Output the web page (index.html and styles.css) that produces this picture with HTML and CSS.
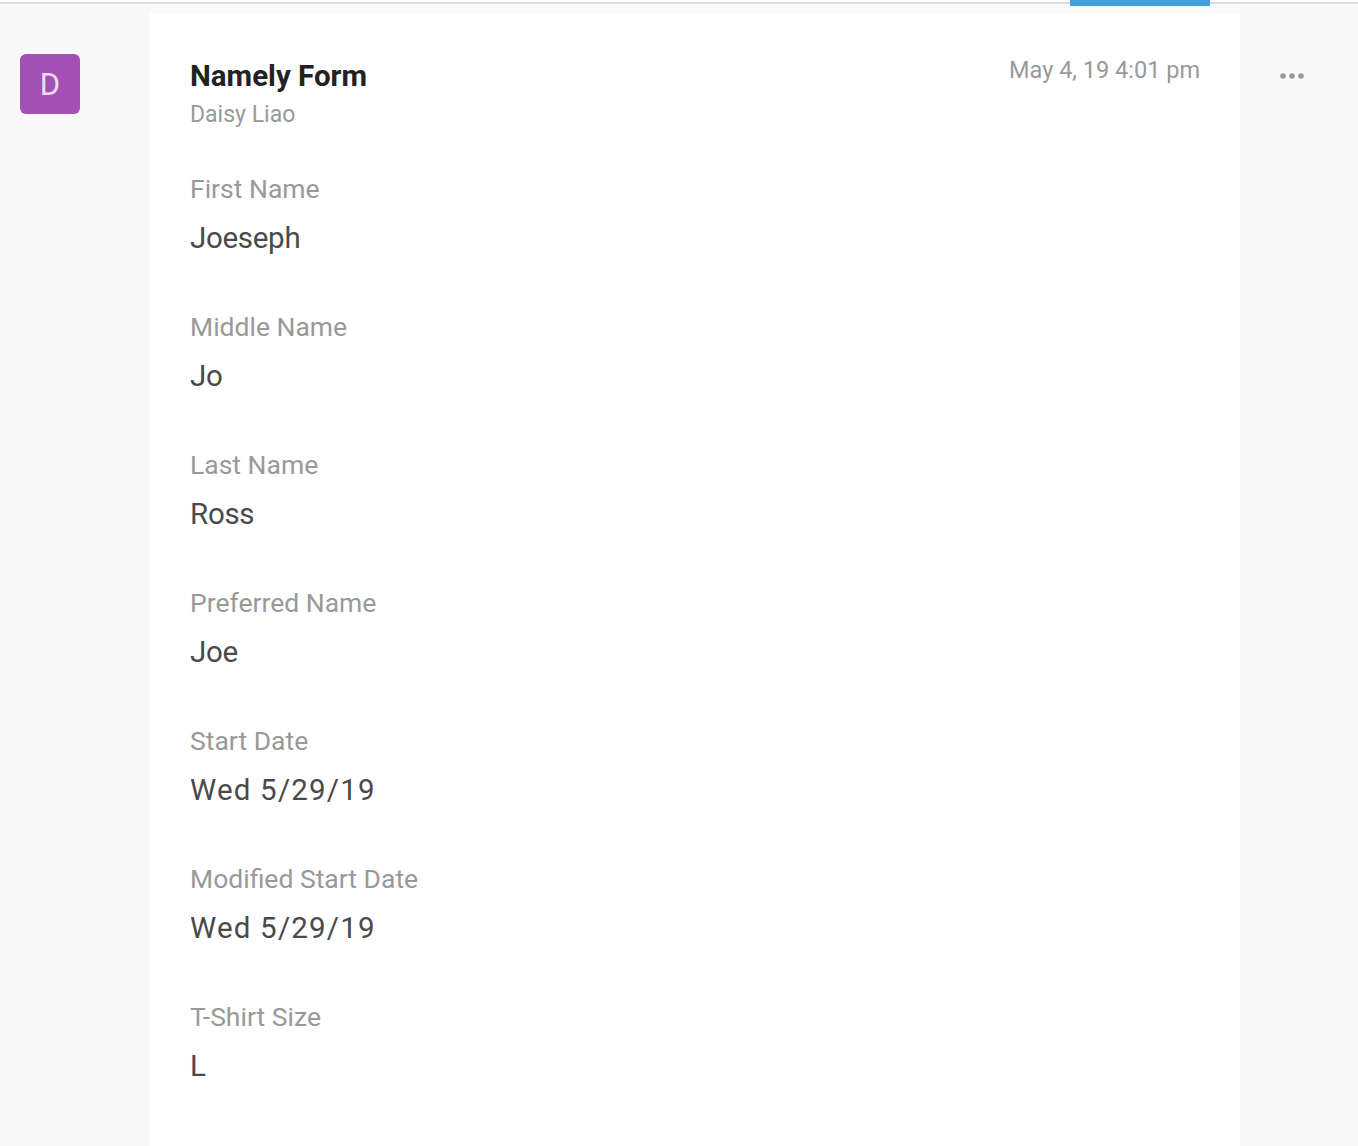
FILE: index.html
```html
<!DOCTYPE html>
<html lang="en">
<head>
    <meta charset="UTF-8">
    <title>Namely Form</title>
    <link rel="stylesheet" href="styles.css">
</head>
<body>
    <!-- Top bar -->
    <div class="topbar">
        <div class="tab-active"></div>
    </div>

    <div class="layout">
        <div class="avatar-col">
            <div class="avatar">D</div>
        </div>

        <!-- Form card -->
        <div class="card">
            <div class="card-head">
                <div>
                    <h1>Namely Form</h1>
                    <div class="author">Daisy Liao</div>
                </div>
                <div class="time">May 4, 19 4:01 pm</div>
            </div>

            <div class="field">
                <div class="label">First Name</div>
                <div class="value">Joeseph</div>
            </div>
            <div class="field">
                <div class="label">Middle Name</div>
                <div class="value">Jo</div>
            </div>
            <div class="field">
                <div class="label">Last Name</div>
                <div class="value">Ross</div>
            </div>
            <div class="field">
                <div class="label">Preferred Name</div>
                <div class="value">Joe</div>
            </div>
            <div class="field">
                <div class="label">Start Date</div>
                <div class="value date">Wed 5/29/19</div>
            </div>
            <div class="field">
                <div class="label">Modified Start Date</div>
                <div class="value date">Wed 5/29/19</div>
            </div>
            <div class="field">
                <div class="label">T-Shirt Size</div>
                <div class="value">L</div>
            </div>
        </div>

        <div class="more-col">
            <svg class="more" width="24" height="6" viewBox="0 0 24 6"><circle cx="3" cy="3" r="2.8"/><circle cx="12" cy="3" r="2.8"/><circle cx="21" cy="3" r="2.8"/></svg>
        </div>
    </div>
</body>
</html>
```

FILE: styles.css
```css
* {
    margin: 0;
    padding: 0;
    box-sizing: border-box;
    font-family: Roboto, "Noto Sans", sans-serif;
}

html, body {
    height: 100%;
    overflow: hidden;
}

body {
    background-color: #f9f9f9;
    color: #444;
}

/* Top bar */
.topbar {
    height: 13px;
    background: linear-gradient(to bottom, #fff 0, #fff 2px, #ddd 2px, #ddd 4px, #f9f9f9 4px);
    display: flex;
    justify-content: flex-end;
    padding-right: 148px;
}

.tab-active {
    width: 140px;
    height: 6px;
    background-color: #429fd9;
}

.layout {
    display: flex;
    height: 1133px;
}

.avatar-col {
    width: 150px;
    padding: 41px 0 0 20px;
}

.avatar {
    width: 60px;
    height: 60px;
    border-radius: 6px;
    background-color: #a34fb3;
    color: #eedcf2;
    font-size: 31px;
    display: flex;
    align-items: center;
    justify-content: center;
}

/* Card */
.card {
    width: 1090px;
    background-color: #fff;
    padding: 44px 40px 0;
}

.card-head {
    display: flex;
    justify-content: space-between;
    align-items: flex-start;
    margin-bottom: 38px;
}

h1 {
    font-size: 29.5px;
    line-height: 39px;
    font-weight: 700;
    color: #222;
}

.author {
    font-size: 23px;
    line-height: 38px;
    color: #999;
}

.time {
    font-size: 23.5px;
    line-height: 26px;
    color: #999;
}

.field {
    height: 138px;
}

.label {
    font-size: 26.5px;
    line-height: 34px;
    color: #999;
}

.value {
    font-size: 29.5px;
    line-height: 62px;
    padding-top: 1px;
    letter-spacing: -0.3px;
    color: #4a4a4a;
}

.date {
    letter-spacing: 1.2px;
}

.more-col {
    flex: 1;
    padding: 60px 0 0 40px;
}

.more {
    fill: #999;
    display: block;
}
```
